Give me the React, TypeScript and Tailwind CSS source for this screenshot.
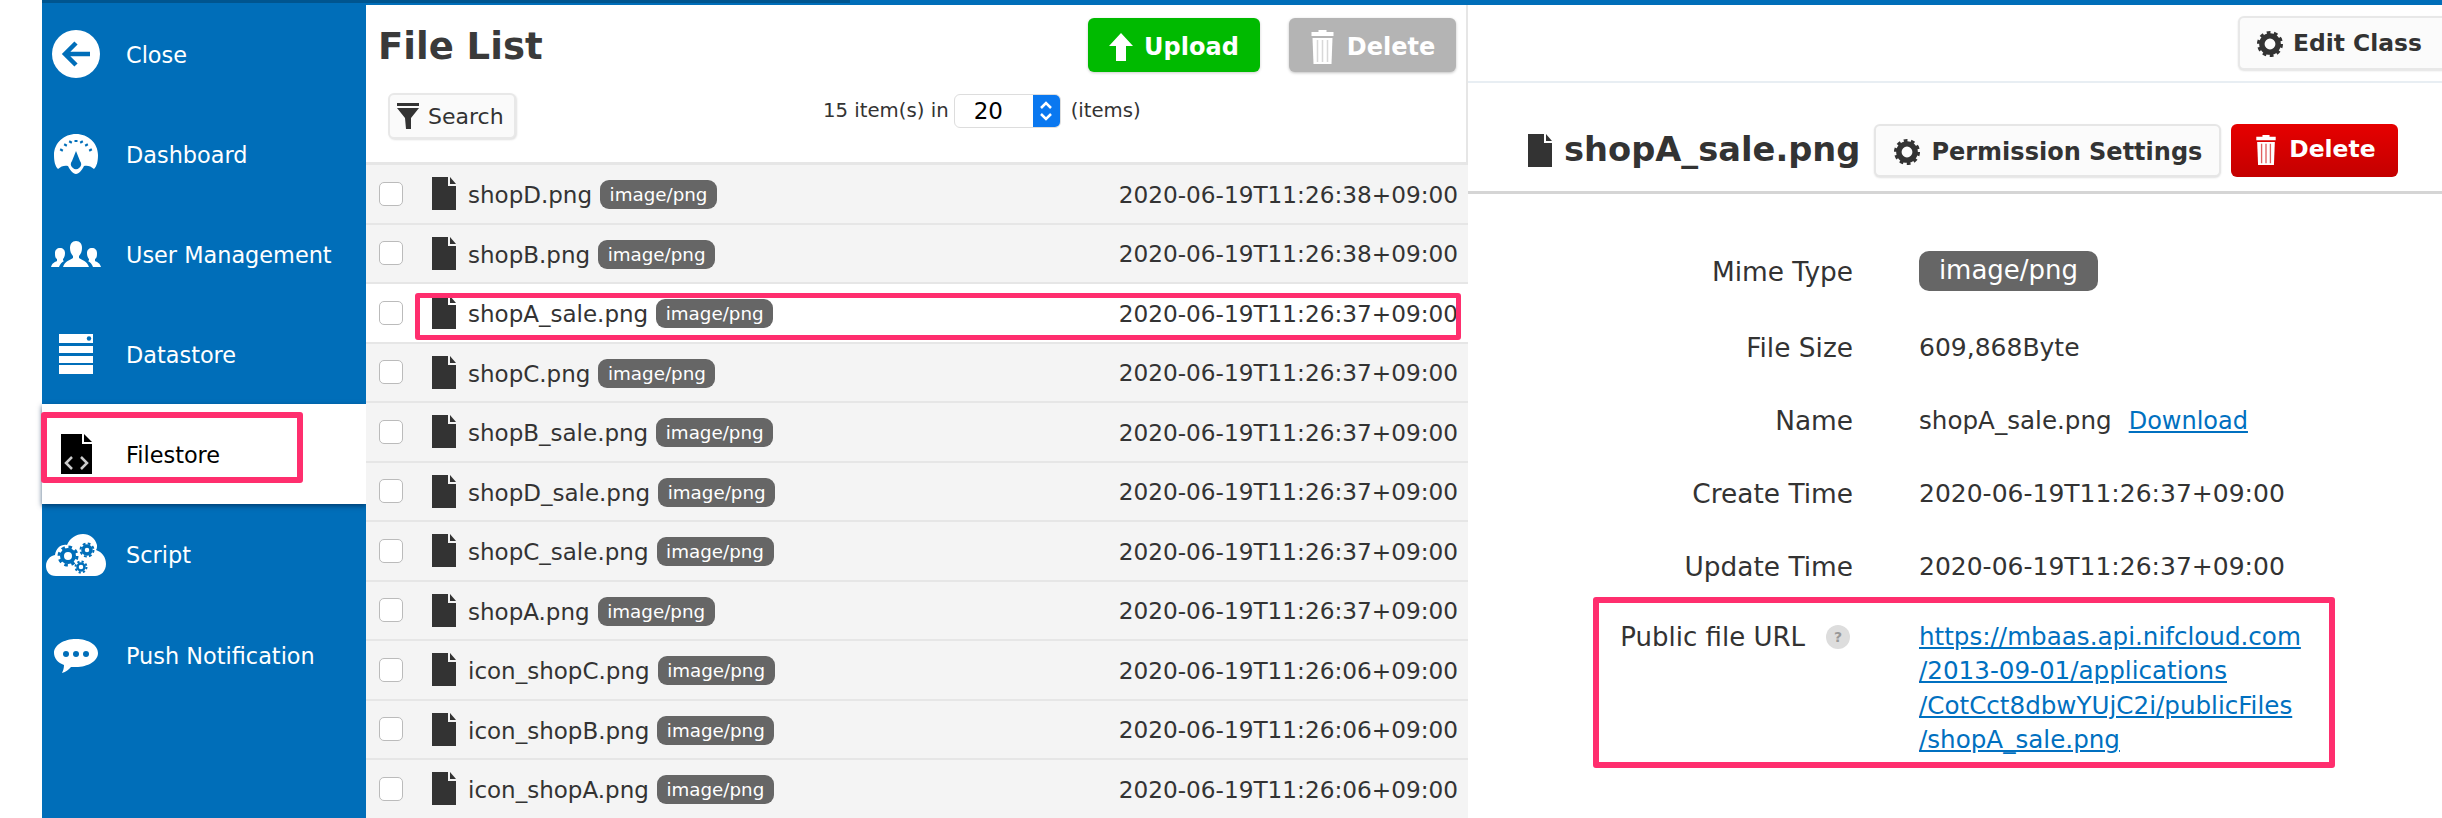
import type { ReactNode } from "react";

type FileRow = { name: string; time: string; selected?: boolean };

const files: FileRow[] = [
    { name: "shopD.png", time: "2020-06-19T11:26:38+09:00" },
    { name: "shopB.png", time: "2020-06-19T11:26:38+09:00" },
    { name: "shopA_sale.png", time: "2020-06-19T11:26:37+09:00", selected: true },
    { name: "shopC.png", time: "2020-06-19T11:26:37+09:00" },
    { name: "shopB_sale.png", time: "2020-06-19T11:26:37+09:00" },
    { name: "shopD_sale.png", time: "2020-06-19T11:26:37+09:00" },
    { name: "shopC_sale.png", time: "2020-06-19T11:26:37+09:00" },
    { name: "shopA.png", time: "2020-06-19T11:26:37+09:00" },
    { name: "icon_shopC.png", time: "2020-06-19T11:26:06+09:00" },
    { name: "icon_shopB.png", time: "2020-06-19T11:26:06+09:00" },
    { name: "icon_shopA.png", time: "2020-06-19T11:26:06+09:00" },
];

function CloseIcon() {
    return (
        <svg viewBox="0 0 48 48" className="h-[48px] w-[48px]">
            <circle cx="24" cy="24" r="24" fill="#fff" />
            <path d="M38 24H14M24 13 13 24l11 11" fill="none" stroke="#006eb9" strokeWidth="4.5" />
        </svg>
    );
}

function GaugeIcon() {
    return (
        <svg viewBox="0 0 44 40" className="h-[40px] w-[44px]">
            <path d="M22 0C10 0 0 9 0 21c0 6 1 11 4 14 3-3 7-4 10-3 2 4 5 8 8 8s6-4 8-8c3-1 7 0 10 3 3-3 4-8 4-14C44 9 34 0 22 0Z" fill="#fff" />
            <path d="M7 17l1-2M11 12l1-2M16 9l1-2M22 8V6M28 9l-1-2M33 12l-1-2M37 17l-1-2" stroke="#006eb9" strokeWidth="3" />
            <path d="M22 17l4 10a5 5 0 1 1-8 0Z" fill="#006eb9" />
        </svg>
    );
}

function UsersIcon() {
    return (
        <svg viewBox="0 0 50 27" className="h-[27px] w-[50px]" fill="#fff">
            <path d="M25 0c4 0 6 3 6 7 0 3-1 6-3 8v2c3 2 8 3 10 9H12c2-6 7-7 10-9v-2c-2-2-3-5-3-8 0-4 2-7 6-7Z" />
            <path d="M9 7c3 0 5 2 5 5 0 3-1 5-2 6 0 1 0 2 1 2-2 1-4 3-5 6H0c1-4 4-5 6-6v-2c-2-1-2-4-2-6 0-3 2-5 5-5Z" />
            <path d="M41 7c-3 0-5 2-5 5 0 3 1 5 2 6 0 1 0 2-1 2 2 1 4 3 5 6h8c-1-4-4-5-6-6v-2c2-1 2-4 2-6 0-3-2-5-5-5Z" />
        </svg>
    );
}

function DatastoreIcon() {
    return (
        <svg viewBox="0 0 34 40" className="h-[40px] w-[34px]" fill="#fff">
            <rect width="34" height="9" y="0" />
            <rect width="34" height="7" y="12" />
            <rect width="34" height="7" y="22" />
            <rect width="34" height="9" y="31" />
            <circle cx="30" cy="4.5" r="2.2" fill="#006eb9" />
        </svg>
    );
}

function FileCodeIcon() {
    return (
        <svg viewBox="0 0 31 40" className="h-[40px] w-[31px]">
            <path d="M0 0h21v10h10v30H0Z" fill="#000" />
            <path d="M23 0l8 8h-8Z" fill="#000" />
            <path d="M11 23l-6 6 6 6M20 23l6 6-6 6" fill="none" stroke="#ccc" strokeWidth="2.5" />
        </svg>
    );
}

function ScriptIcon() {
    return (
        <svg viewBox="0 0 60 42" className="h-[42px] w-[60px]">
            <path d="M10 42C3 42 0 37 0 32c0-6 4-10 9-11 1-7 6-11 12-10C24 4 30 0 37 0c7 0 12 4 14 11 0 2 0 4-1 5 6 2 10 7 10 14 0 7-5 12-11 12Z" fill="#fff" />
            <g fill="none" stroke="#006eb9">
                <circle cx="22" cy="22" r="6" strokeWidth="4" />
                <circle cx="22" cy="22" r="9" strokeWidth="3" strokeDasharray="3.5 3.6" />
                <circle cx="35" cy="33" r="3.5" strokeWidth="2.5" />
                <circle cx="35" cy="33" r="5.5" strokeWidth="2" strokeDasharray="2.2 2.1" />
                <circle cx="41" cy="16" r="4" strokeWidth="3.5" />
                <circle cx="41" cy="16" r="6.5" strokeWidth="2" strokeDasharray="2.8 2.3" />
            </g>
        </svg>
    );
}

function ChatIcon() {
    return (
        <svg viewBox="0 0 44 34" className="h-[34px] w-[44px]">
            <path d="M22 0c12 0 22 6 22 14S34 28 22 28c-2 0-4 0-5 0-2 2-5 5-9 6 1-2 2-5 2-8C4 24 0 19 0 14 0 6 10 0 22 0Z" fill="#fff" />
            <circle cx="12" cy="15" r="3" fill="#006eb9" />
            <circle cx="22" cy="15" r="3" fill="#006eb9" />
            <circle cx="32" cy="15" r="3" fill="#006eb9" />
        </svg>
    );
}

function FileIcon({ className }: { className: string }) {
    return (
        <svg viewBox="0 0 24 33" className={className} fill="#333">
            <path d="M0 0h16v9h8v24H0Z" />
            <path d="M18 0l6 7h-6Z" />
        </svg>
    );
}

function GearIcon({ className }: { className: string }) {
    return (
        <svg viewBox="0 0 24 24" className={className}>
            <circle cx="12" cy="12" r="7.5" fill="none" stroke="#333" strokeWidth="5" />
            <circle cx="12" cy="12" r="10.5" fill="none" stroke="#333" strokeWidth="3" strokeDasharray="3.4 3.2" />
        </svg>
    );
}

function TrashIcon({ className, stripe }: { className: string; stripe: string }) {
    return (
        <svg viewBox="0 0 24 34" className={className}>
            <path d="M8 0h8v2h7v4H1V2h7Z" fill="#fff" />
            <path d="M2 8h20l-1 26H3Z" fill="#fff" />
            <path d="M7 10v22M12 10v22M17 10v22" stroke={stripe} strokeWidth="1.5" />
        </svg>
    );
}

function SideItem({ icon, label, active, height }: { icon: ReactNode; label: string; active?: boolean; height: string }) {
    return (
        <div className={`flex items-center ${height} ${active ? "bg-white text-black shadow-[0_2px_5px_rgba(0,40,80,0.7)]" : "text-white"}`}>
            <div className="flex w-[84px] shrink-0 justify-center pr-[16px]">{icon}</div>
            <span className="pt-[3px]">{label}</span>
        </div>
    );
}

function Badge({ children, className }: { children: ReactNode; className: string }) {
    return <span className={`inline-flex items-center justify-center bg-[#666] text-white ${className}`}>{children}</span>;
}

function FileListRow({ file }: { file: FileRow }) {
    return (
        <div className={`flex h-[59.5px] shrink-0 items-center border-b-[2px] border-[#e6e6e6] pr-[10px] text-[23px] text-[#333] ${file.selected ? "bg-white" : "bg-[#f4f4f4]"}`}>
            <div className="ml-[13px] h-[24px] w-[24px] shrink-0 rounded-[5px] border border-[#bbb] bg-white" />
            <FileIcon className="ml-[29px] h-[33px] w-[24px] shrink-0" />
            <span className="ml-[12px] pt-[3px]">{file.name}</span>
            <Badge className="mt-[2px] ml-[8px] h-[29px] w-[117px] rounded-[9px] text-[18.3px]">image/png</Badge>
            <span className="ml-auto pt-[3px] text-[23.2px]">{file.time}</span>
        </div>
    );
}

function DetailRow({ label, children, height }: { label: ReactNode; children: ReactNode; height: string }) {
    return (
        <div className={`flex items-center ${height}`}>
            <div className="flex w-[385px] shrink-0 justify-end text-[#333]">{label}</div>
            <div className="ml-[66px] text-[25px]">{children}</div>
        </div>
    );
}

export default function App() {
    return (
        <div className="relative flex h-[818px] w-[2442px] overflow-hidden bg-white font-['DejaVu_Sans',sans-serif]">
            <div className="w-[42px] shrink-0" />
            <div className="flex min-w-0 flex-1 flex-col">
                <div className="h-[5px] shrink-0 bg-[#006eb9]">
                    <div className="h-[3px] w-[808px] bg-[#00558f]" />
                </div>
                <div className="flex min-h-0 flex-1">
                    <aside className="-mt-px w-[324px] shrink-0 bg-[#006eb9] text-[22.4px]">
                        <SideItem height="h-[100px]" icon={<CloseIcon />} label="Close" />
                        <SideItem height="h-[100px]" icon={<GaugeIcon />} label="Dashboard" />
                        <SideItem height="h-[100px]" icon={<UsersIcon />} label="User Management" />
                        <SideItem height="h-[100px]" icon={<DatastoreIcon />} label="Datastore" />
                        <SideItem height="h-[100px]" active icon={<FileCodeIcon />} label="Filestore" />
                        <SideItem height="h-[101px]" icon={<ScriptIcon />} label="Script" />
                        <SideItem height="h-[101px]" icon={<ChatIcon />} label="Push Notification" />
                    </aside>

                    <section className="flex w-[1102px] shrink-0 flex-col">
                        <div className="h-[160px] shrink-0 border-r-[2px] border-b-[3px] border-[#e6e6e6]">
                            <div className="flex h-[87px] items-start pt-[13px] pr-[10px] pl-[12px]">
                                <h1 className="mt-[4px] text-[37px] leading-[50px] font-bold text-[#3a3a3a]">File List</h1>
                                <button className="ml-auto flex h-[54px] w-[172px] items-center justify-center gap-[11px] rounded-[6px] bg-[#00ba00] pt-[3px] text-[24px] font-bold text-white shadow-[0_1px_3px_rgba(0,0,0,0.2)]">
                                    <svg viewBox="0 0 24 28" className="h-[28px] w-[24px]" fill="#fff">
                                        <path d="M12 0l12 13h-7v15H7V13H0Z" />
                                    </svg>
                                    Upload
                                </button>
                                <button className="ml-[29px] flex h-[54px] w-[167px] items-center justify-center gap-[12px] rounded-[6px] bg-[#b4b4b4] pt-[3px] text-[24px] font-bold text-white shadow-[0_1px_3px_rgba(0,0,0,0.25)]">
                                    <TrashIcon className="h-[34px] w-[25px]" stripe="#d8d8d8" />
                                    Delete
                                </button>
                            </div>
                            <div className="flex items-start pl-[22px]">
                                <button className="mt-[1px] flex h-[46px] w-[128px] items-center gap-[9px] rounded-[6px] border-2 border-[#e8e8e8] bg-[#fafafa] pl-[7px] text-[22px] text-[#333] shadow-[1px_1px_2px_rgba(0,0,0,0.12)]">
                                    <svg viewBox="0 0 22 26" className="h-[26px] w-[22px]" fill="#333">
                                        <path d="M0 0h22v3H0ZM0 5h22l-8 10v11h-5l-1-11Z" />
                                    </svg>
                                    Search
                                </button>
                                <div className="ml-[307px] flex h-[38px] items-center text-[19.7px] text-[#333]">
                                    <span>15 item(s) in</span>
                                    <div className="ml-[5px] flex h-[34px] w-[107px] overflow-hidden rounded-[6px] border border-[#ddd] bg-white text-[23px] text-black">
                                        <span className="flex-1 pl-[19px] leading-[32px]">20</span>
                                        <span className="flex w-[27px] items-center justify-center bg-[#0a78f0]">
                                            <svg viewBox="0 0 14 24" className="h-[24px] w-[14px]" fill="none" stroke="#fff" strokeWidth="2.5">
                                                <path d="M2 9l5-5 5 5M2 15l5 5 5-5" />
                                            </svg>
                                        </span>
                                    </div>
                                    <span className="ml-[10px]">(items)</span>
                                </div>
                            </div>
                        </div>
                        {files.map((file) => (
                            <FileListRow key={file.name} file={file} />
                        ))}
                    </section>

                    <section className="min-w-0 flex-1 text-[#333]">
                        <div className="flex h-[78px] justify-start border-b-2 border-[#e8eef3] pt-[11px] pl-[770px]">
                            <button className="flex h-[54px] w-[220px] shrink-0 items-center gap-[10px] rounded-l-[6px] border-2 border-[#e8e8e8] bg-[#fbfbfb] pt-[2px] pl-[17px] text-[23.4px] font-bold whitespace-nowrap shadow-[0_1px_2px_rgba(0,0,0,0.12)]">
                                <GearIcon className="h-[26px] w-[26px]" />
                                Edit Class
                            </button>
                        </div>
                        <div className="flex h-[111px] items-center border-b-[3px] border-[#d5d5d5] pt-[26px] pl-[60px]">
                            <FileIcon className="h-[33px] w-[24px] shrink-0" />
                            <span className="ml-[12px] text-[33.7px] leading-none font-bold">shopA_sale.png</span>
                            <button className="ml-[14px] flex h-[53px] w-[347px] items-center gap-[11px] rounded-[6px] border-2 border-[#e6e6e6] bg-[#fbfbfb] pt-[3px] pl-[18px] text-[24px] font-bold whitespace-nowrap shadow-[0_1px_2px_rgba(0,0,0,0.12)]">
                                <GearIcon className="h-[26px] w-[26px]" />
                                Permission Settings
                            </button>
                            <button className="ml-[10px] flex h-[53px] w-[167px] items-center justify-center gap-[11px] rounded-[6px] bg-gradient-to-b from-[#e60000] to-[#c40000] text-[23.4px] font-bold text-white">
                                <TrashIcon className="h-[30px] w-[24px]" stripe="#e06060" />
                                Delete
                            </button>
                        </div>

                        <div className="pt-[38px] text-[26.4px]">
                            <DetailRow height="h-[79px]" label="Mime Type">
                                <Badge className="-mt-[9px] h-[40px] w-[179px] rounded-[10px] text-[26px]">image/png</Badge>
                            </DetailRow>
                            <DetailRow height="h-[73px]" label="File Size">609,868Byte</DetailRow>
                            <DetailRow height="h-[73px]" label="Name">
                                <span className="text-[24.6px]">shopA_sale.png</span>
                                <a className="ml-[17px] text-[24px] text-[#0070c0] underline">Download</a>
                            </DetailRow>
                            <DetailRow height="h-[73px]" label="Create Time">2020-06-19T11:26:37+09:00</DetailRow>
                            <DetailRow height="h-[73px]" label="Update Time">2020-06-19T11:26:37+09:00</DetailRow>
                            <div className="flex pt-[17px]">
                                <div className="flex w-[385px] shrink-0 items-center justify-end gap-[21px] self-start pr-[3px] text-[26px]">
                                    <span className="leading-[34px]">Public file URL</span>
                                    <span className="flex h-[24px] w-[24px] items-center justify-center rounded-full bg-[#ddd] text-[14px] font-bold text-[#999]">?</span>
                                </div>
                                <a className="ml-[66px] text-[24.6px] leading-[34.3px] text-[#0070c0] underline">
                                    https://mbaas.api.nifcloud.com
                                    <br />
                                    /2013-09-01/applications
                                    <br />
                                    /CotCct8dbwYUjC2i/publicFiles
                                    <br />
                                    /shopA_sale.png
                                </a>
                            </div>
                        </div>
                    </section>
                </div>
            </div>

            <div className="pointer-events-none absolute top-[412px] left-[41px] h-[71px] w-[262px] rounded-[3px] border-[6px] border-[#ff2e6e]" />
            <div className="pointer-events-none absolute top-[293px] left-[415px] h-[47px] w-[1046px] rounded-[3px] border-[5px] border-[#ff2e6e]" />
            <div className="pointer-events-none absolute top-[597px] left-[1593px] h-[171px] w-[742px] rounded-[3px] border-[6px] border-[#ff2e6e]" />
        </div>
    );
}
